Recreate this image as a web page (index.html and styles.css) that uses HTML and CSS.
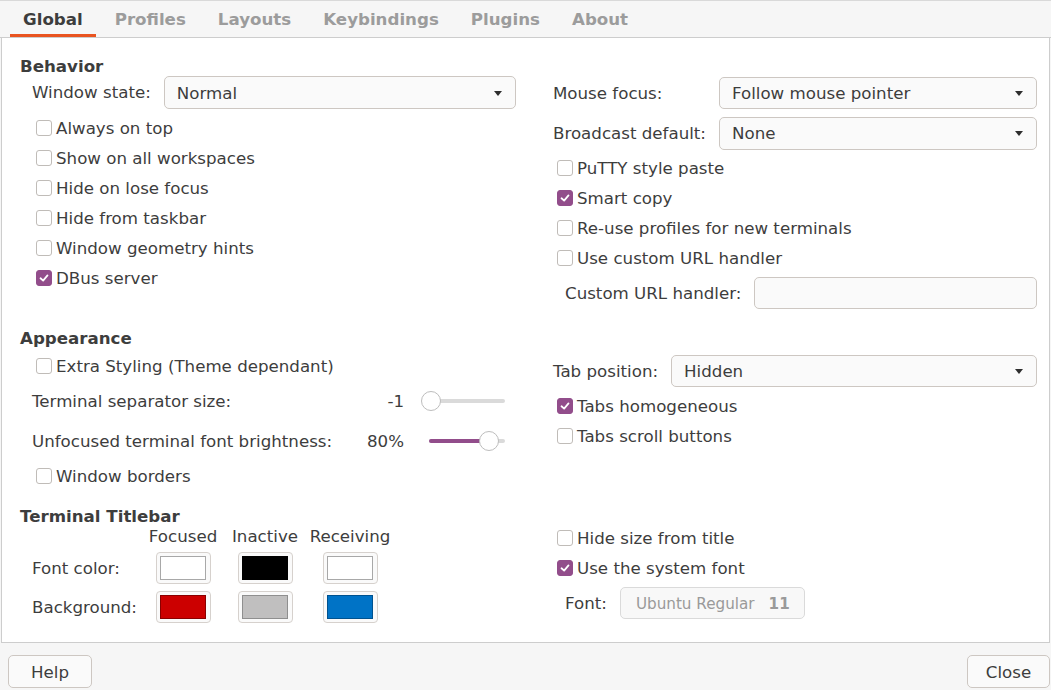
FILE: index.html
```html
<!DOCTYPE html>
<html>
<head>
<meta charset="utf-8">
<link rel="stylesheet" href="styles.css">
</head>
<body>
<div class="tabs">
  <div class="tab active">Global</div>
  <div class="tab">Profiles</div>
  <div class="tab">Layouts</div>
  <div class="tab">Keybindings</div>
  <div class="tab">Plugins</div>
  <div class="tab">About</div>
</div>
<div class="main">
  <section class="section">
    <div class="col-left">
      <div class="heading">Behavior</div>
      <div class="field">
        <span class="label">Window state:</span>
        <div class="combo low"><span>Normal</span><i class="arrow"></i></div>
      </div>
      <div class="checks gap4">
        <label class="check"><span class="box"></span>Always on top</label>
        <label class="check"><span class="box"></span>Show on all workspaces</label>
        <label class="check"><span class="box"></span>Hide on lose focus</label>
        <label class="check"><span class="box"></span>Hide from taskbar</label>
        <label class="check"><span class="box"></span>Window geometry hints</label>
        <label class="check"><span class="box on"><svg viewBox="0 0 16 16"><polyline points="4,8.3 7,11 12,5"/></svg></span>DBus server</label>
      </div>
    </div>
    <div class="col-right pt21">
      <div class="form">
        <span class="label">Mouse focus:</span>
        <div class="combo short"><span>Follow mouse pointer</span><i class="arrow"></i></div>
        <span class="label">Broadcast default:</span>
        <div class="combo"><span>None</span><i class="arrow"></i></div>
      </div>
      <div class="checks right gap3">
        <label class="check"><span class="box"></span>PuTTY style paste</label>
        <label class="check"><span class="box on"><svg viewBox="0 0 16 16"><polyline points="4,8.3 7,11 12,5"/></svg></span>Smart copy</label>
        <label class="check"><span class="box"></span>Re-use profiles for new terminals</label>
        <label class="check"><span class="box"></span>Use custom URL handler</label>
      </div>
      <div class="row40">
        <span class="label">Custom URL handler:</span>
        <div class="entry"></div>
      </div>
    </div>
  </section>

  <section class="section">
    <div class="col-left">
      <div class="heading">Appearance</div>
      <div class="checks gap3">
        <label class="check"><span class="box"></span>Extra Styling (Theme dependant)</label>
      </div>
      <div class="slider-row">
        <span class="label grow">Terminal separator size:</span>
        <span class="value">-1</span>
        <div class="slider"><div class="fill" style="width:10px"></div><div class="knob" style="left:1px"></div></div>
      </div>
      <div class="slider-row">
        <span class="label grow">Unfocused terminal font brightness:</span>
        <span class="value">80%</span>
        <div class="slider"><div class="fill" style="width:62px"></div><div class="knob" style="left:59px"></div></div>
      </div>
      <div class="checks">
        <label class="check"><span class="box"></span>Window borders</label>
      </div>
    </div>
    <div class="col-right pt27">
      <div class="field flush">
        <span class="label">Tab position:</span>
        <div class="combo short"><span>Hidden</span><i class="arrow"></i></div>
      </div>
      <div class="checks right gap4">
        <label class="check"><span class="box on"><svg viewBox="0 0 16 16"><polyline points="4,8.3 7,11 12,5"/></svg></span>Tabs homogeneous</label>
        <label class="check"><span class="box"></span>Tabs scroll buttons</label>
      </div>
    </div>
  </section>

  <section class="section">
    <div class="col-left">
      <div class="heading">Terminal Titlebar</div>
      <div class="colors">
        <span></span>
        <span class="colhead">Focused</span>
        <span class="colhead">Inactive</span>
        <span class="colhead">Receiving</span>
        <span class="rowlabel">Font color:</span>
        <div class="swatch"><span class="sw white"></span></div>
        <div class="swatch"><span class="sw black"></span></div>
        <div class="swatch"><span class="sw white"></span></div>
        <span class="rowlabel">Background:</span>
        <div class="swatch"><span class="sw red"></span></div>
        <div class="swatch"><span class="sw gray"></span></div>
        <div class="swatch"><span class="sw blue"></span></div>
      </div>
    </div>
    <div class="col-right pt17">
      <div class="checks right">
        <label class="check"><span class="box"></span>Hide size from title</label>
        <label class="check"><span class="box on"><svg viewBox="0 0 16 16"><polyline points="4,8.3 7,11 12,5"/></svg></span>Use the system font</label>
      </div>
      <div class="row40">
        <span class="label">Font:</span>
        <div class="fontbtn"><span>Ubuntu Regular</span><b>11</b></div>
      </div>
    </div>
  </section>
</div>
<div class="footer">
  <button class="btn help">Help</button>
  <button class="btn close">Close</button>
</div>
</body>
</html>
```

FILE: styles.css
```css
* { box-sizing: border-box; }
html, body { margin: 0; padding: 0; }
body {
  width: 1051px;
  height: 690px;
  overflow: hidden;
  background: #f6f6f6;
  font-family: "DejaVu Sans", sans-serif;
  font-size: 16.67px;
  color: #3d3d3d;
}

.tabs {
  display: flex;
  height: 38px;
  border-top: 1px solid #d9d9d9;
  border-bottom: 1px solid #cdcdcd;
  padding-left: 10px;
  background: #f6f6f6;
}
.tab {
  padding: 0 13px;
  margin-right: 6px;
  line-height: 38px;
  height: 36px;
  font-size: 16.67px;
  font-weight: bold;
  color: #9c9c9c;
}
.tab.active {
  color: #3d3d3d;
  box-shadow: inset 0 -3px #e95420;
}

.main {
  margin: 0 1px;
  height: 605px;
  background: #fff;
  border: 1px solid #cdcdcd;
  border-top: none;
  padding: 18px 12px 0 18px;
}

.section {
  display: grid;
  grid-template-columns: 496px 1fr;
  column-gap: 37px;
  align-items: start;
}
.section + .section { margin-top: 15px; }

.heading {
  font-weight: bold;
  line-height: 22px;
  height: 20px;
}

.pt21 { padding-top: 21px; }
.pt27 { padding-top: 27px; }
.pt17 { padding-top: 17px; }

.label { white-space: nowrap; }
.grow { flex: 1; }

.field {
  display: flex;
  align-items: center;
  gap: 13px;
  padding-left: 12px;
}
.field.flush { padding-left: 0; }
.field .combo { flex: 1; }

.combo {
  height: 33px;
  display: flex;
  align-items: center;
  justify-content: space-between;
  padding: 0 13px 0 12px;
  background: #fafafa;
  border: 1px solid #cdc7c2;
  border-radius: 5px;
}
.combo.low { padding-top: 2px; }
.combo.short { height: 32px; padding-top: 1px; }
.arrow {
  width: 0;
  height: 0;
  border-left: 4.5px solid transparent;
  border-right: 4.5px solid transparent;
  border-top: 5px solid #2e2e2e;
}

.form {
  display: grid;
  grid-template-columns: 166px 1fr;
  row-gap: 8px;
  align-items: center;
}

.checks { padding-left: 16px; }
.checks.right { padding-left: 4px; }
.gap3 { margin-top: 3px; }
.gap4 { margin-top: 4px; }
.check {
  display: flex;
  align-items: center;
  height: 30px;
  white-space: nowrap;
}
.box {
  width: 16px;
  height: 16px;
  margin-right: 4px;
  border: 1px solid #c0bcb8;
  border-radius: 3px;
  background: #fff;
  flex: none;
  display: flex;
}
.box.on {
  background: #924d8b;
  border-color: #924d8b;
}
.box svg {
  width: 14px;
  height: 14px;
  fill: none;
  stroke: #fff;
  stroke-width: 2;
  stroke-linecap: round;
  stroke-linejoin: round;
}

.row40 {
  height: 40px;
  display: flex;
  align-items: center;
  gap: 13px;
  padding-left: 12px;
}
.entry {
  flex: 1;
  height: 32px;
  background: #fafafa;
  border: 1px solid #cdc7c2;
  border-radius: 5px;
}

.slider-row {
  height: 40px;
  display: flex;
  align-items: center;
  padding: 0 11px 0 12px;
}
.value {
  width: 60px;
  text-align: right;
  margin-right: 16px;
}
.slider {
  position: relative;
  width: 85px;
  height: 20px;
}
.slider::before {
  content: "";
  position: absolute;
  left: 9px;
  right: 0;
  top: 8px;
  height: 4px;
  border-radius: 2px;
  background: #dadada;
}
.fill {
  position: absolute;
  left: 9px;
  top: 8px;
  height: 4px;
  border-radius: 2px;
  background: #924d8b;
}
.knob {
  position: absolute;
  top: 0;
  width: 20px;
  height: 20px;
  border-radius: 50%;
  background: #fff;
  border: 1px solid #bdbdbd;
}

.colors {
  display: grid;
  grid-template-columns: 118px 66px 98px 72px;
  grid-template-rows: 20px 38px 39px;
  align-items: end;
  justify-items: center;
  padding-left: 12px;
}
.colhead { line-height: 22px; height: 20px; white-space: nowrap; }
.rowlabel {
  justify-self: start;
  height: 32px;
  line-height: 34px;
  white-space: nowrap;
}
.swatch {
  width: 55px;
  height: 32px;
  background: #fafafa;
  border: 1px solid #d6d1cd;
  border-radius: 4px;
  display: flex;
  align-items: center;
  justify-content: center;
}
.sw {
  width: 46px;
  height: 24px;
  border: 1px solid #a8a8a8;
}
.sw.white { background: #fff; }
.sw.black { background: #000; border-color: #000; }
.sw.red { background: #cc0000; border-color: #8a0000; }
.sw.gray { background: #c0bfbf; border-color: #8f8f8f; }
.sw.blue { background: #0073c6; border-color: #00528f; }

.fontbtn {
  width: 185px;
  height: 32px;
  border: 1px solid #dadada;
  border-radius: 5px;
  background: #f8f8f8;
  color: #9a9a9a;
  font-size: 15.2px;
  display: flex;
  align-items: center;
  padding: 1px 0 0 15px;
  gap: 14px;
}
.fontbtn b { font-weight: bold; }

.footer {
  height: 47px;
  display: flex;
  justify-content: space-between;
  align-items: flex-start;
  padding: 12px 1px 0 8px;
}
.btn {
  height: 33px;
  font-family: inherit;
  font-size: inherit;
  color: #3d3d3d;
  background: #fafafa;
  border: 1px solid #cdc7c2;
  border-radius: 5px;
  padding: 1px 0 0;
}
.help { width: 84px; }
.close { width: 83px; }
```
